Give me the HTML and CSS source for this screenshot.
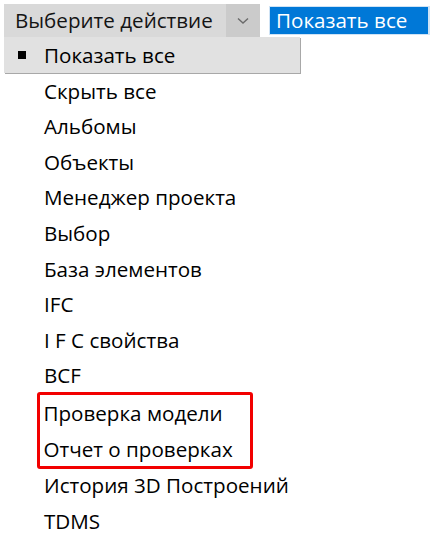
FILE: index.html
```html
<!DOCTYPE html>
<html lang="ru">
<head>
<meta charset="utf-8">
<link rel="stylesheet" href="styles.css">
</head>
<body>
<div class="page">
  <div class="toolbar">
    <div class="select">
      <span class="select-label">Выберите действие</span>
      <span class="select-arrow">
        <svg width="12" height="8" viewBox="0 0 12 8"><path d="M1 1.5 L6 6 L11 1.5" fill="none" stroke="#6a6a6a" stroke-width="1.4"/></svg>
      </span>
    </div>
    <div class="value">Показать все</div>
  </div>
  <ul class="menu">
    <li class="item active"><span class="bullet"></span>Показать все</li>
    <li class="item">Скрыть все</li>
    <li class="item">Альбомы</li>
    <li class="item">Объекты</li>
    <li class="item">Менеджер проекта</li>
    <li class="item">Выбор</li>
    <li class="item">База элементов</li>
    <li class="item">IFC</li>
    <li class="item">I F C свойства</li>
    <li class="item">BCF</li>
    <li class="group">
      <ul class="highlight">
        <li class="item">Проверка модели</li>
        <li class="item">Отчет о проверках</li>
      </ul>
    </li>
    <li class="item">История 3D Построений</li>
    <li class="item">TDMS</li>
  </ul>
</div>
</body>
</html>
```
FILE: styles.css
```css
html, body {
  margin: 0;
  padding: 0;
  background: #ffffff;
}
body {
  font-family: "Open Sans", "Noto Sans", sans-serif;
  font-weight: 500;
  color: #000000;
  font-size: 20.6px;
}
.page {
  padding: 4px 0 0 4px;
}
.toolbar {
  display: flex;
  align-items: center;
  gap: 9px;
  height: 33px;
}
.select {
  display: flex;
  width: 256px;
  height: 33px;
  background: #d9d9d9;
}
.select-label {
  flex: 1;
  padding-left: 11px;
  line-height: 32px;
  color: #141414;
  white-space: nowrap;
}
.select-arrow {
  width: 34px;
  background: #cbcbcb;
  display: flex;
  align-items: center;
  justify-content: center;
}
.value {
  width: 152px;
  height: 27px;
  background: #0078d7;
  color: #ffffff;
  border: 2px solid #cfe3f5;
  border-width: 1px 2px 1px 1px;
  padding-left: 6px;
  line-height: 27px;
  white-space: nowrap;
  overflow: hidden;
}
.menu, .highlight {
  list-style: none;
  margin: 0;
  padding: 0;
}
.menu {
  width: 296px;
}
.item {
  height: 35.6px;
  line-height: 37px;
  padding-left: 40px;
  position: relative;
  white-space: nowrap;
}
.item.active {
  background: #e1e1e1;
  box-shadow: 1px 1px 0 #a8a8a8;
}
.bullet {
  position: absolute;
  left: 14px;
  top: 14px;
  width: 8px;
  height: 8px;
  background: #000;
}
.group {
  padding-left: 33px;
}
.highlight {
  width: 210px;
  border: 3.5px solid #f20000;
  border-radius: 3px;
  margin: 0 0 -3px 0;
  position: relative;
  top: -1px;
}
.highlight .item {
  padding-left: 3.5px;
}
```
